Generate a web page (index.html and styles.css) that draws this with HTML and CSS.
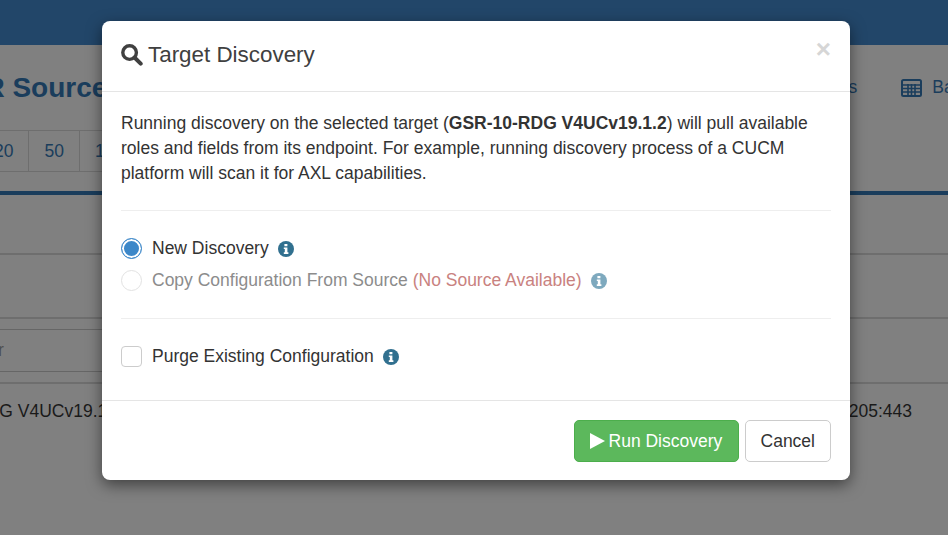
FILE: index.html
```html
<!DOCTYPE html>
<html lang="en">
<head>
  <meta charset="UTF-8">
  <meta name="viewport" content="width=device-width, initial-scale=1.0">
  <title>Target Discovery</title>
  <link rel="stylesheet" href="styles.css">
</head>
<body>

<!-- Screen behind the dialog, already dimmed -->
<div class="screen">
  <div class="topbar"></div>

  <div class="title-row">
    <h1 class="screen-title">CDR Source</h1>
    <div class="screen-links">
      <a class="screen-link">Settings</a>
      <a class="screen-link">
        <svg class="table-icon" viewBox="0 0 21 18">
          <rect x="1" y="1" width="19" height="16" rx="1.5" fill="none" stroke="currentColor" stroke-width="2"/>
          <path d="M1 6h19M1 9.5h19M1 13h19M7 5v12M10.5 5v12M14 5v12" stroke="currentColor" stroke-width="1.6" fill="none"/>
        </svg>
        Bases
      </a>
    </div>
  </div>

  <div class="pager">
    <span class="pager-cell">20</span>
    <span class="pager-cell">50</span>
    <span class="pager-cell">100</span>
  </div>

  <div class="table-head"></div>
  <div class="table-sub"></div>
  <div class="filter-row">
    <div class="filter-box">Filter</div>
  </div>
  <div class="table-row">
    <span class="row-name">GSR-10-RDG V4UCv19.1.2</span>
    <span class="row-host">10.10.20.205:443</span>
  </div>
</div>

<!-- Discovery dialog -->
<div class="dialog">
  <div class="dialog-header">
    <h4 class="dialog-title">
      <svg class="search-icon" viewBox="0 0 22 22">
        <circle cx="8.6" cy="8.6" r="6.8" fill="none" stroke="currentColor" stroke-width="3.4"/>
        <path d="M13.5 13.5l6.2 6.2" stroke="currentColor" stroke-width="4" stroke-linecap="round"/>
      </svg>
      Target Discovery
    </h4>
    <span class="close-x">&times;</span>
  </div>

  <div class="dialog-body">
    <p class="intro">Running discovery on the selected target (<b>GSR-10-RDG V4UCv19.1.2</b>) will pull available roles and fields from its endpoint. For example, running discovery process of a CUCM platform will scan it for AXL capabilities.</p>
    <hr class="divider">

    <div class="options">
      <div class="option">
        <span class="radio checked"></span>
        <span>New Discovery</span>
        <svg class="info-icon" viewBox="0 0 16 16"><circle cx="8" cy="8" r="8" fill="currentColor"/><path d="M6.4 3h3v2.2h-3zM5.8 6.4h3.6v4.9h1v1.7H5.8v-1.7h1v-3.2h-1z" fill="#fff"/></svg>
      </div>
      <div class="option disabled">
        <span class="radio"></span>
        <span>Copy Configuration From Source <span class="no-source">(No Source Available)</span></span>
        <svg class="info-icon" viewBox="0 0 16 16"><circle cx="8" cy="8" r="8" fill="currentColor"/><path d="M6.4 3h3v2.2h-3zM5.8 6.4h3.6v4.9h1v1.7H5.8v-1.7h1v-3.2h-1z" fill="#fff"/></svg>
      </div>
    </div>
    <hr class="divider">

    <div class="option purge">
      <span class="checkbox"></span>
      <span>Purge Existing Configuration</span>
      <svg class="info-icon" viewBox="0 0 16 16"><circle cx="8" cy="8" r="8" fill="currentColor"/><path d="M6.4 3h3v2.2h-3zM5.8 6.4h3.6v4.9h1v1.7H5.8v-1.7h1v-3.2h-1z" fill="#fff"/></svg>
    </div>
  </div>

  <div class="dialog-footer">
    <button class="action action-run">
      <svg class="play-icon" viewBox="0 0 15 16"><path d="M0 0l15 8-15 8z" fill="currentColor"/></svg>
      Run Discovery
    </button>
    <button class="action action-cancel">Cancel</button>
  </div>
</div>

</body>
</html>
```
FILE: styles.css
```css
/* Global Styling */
html, body {
  height: 100%;
}
body {
  position: relative;
  margin: 0;
  overflow: hidden;
  font-family: "Liberation Sans", Arial, sans-serif;
  font-size: 17.5px;
  line-height: 25px;
  color: #333;
  background: #808080;
}

/* Screen behind the dialog */
.screen {
  height: 535px;
  overflow: hidden;
  color: #1a1a1a;
}
.topbar {
  height: 45px;
  background: #224669;
}
.title-row {
  display: flex;
  justify-content: space-between;
  align-items: center;
  height: 85px;
}
.screen-title {
  margin: 0 0 0 -56px;
  font-size: 28px;
  font-weight: bold;
  color: #1a3d5c;
  white-space: nowrap;
}
.screen-links {
  display: flex;
  gap: 44px;
  margin-right: -33px;
  color: #1a3d5c;
}
.screen-link {
  display: flex;
  align-items: center;
  gap: 10px;
}
.table-icon {
  width: 21px;
  height: 18px;
}
.pager {
  display: flex;
  width: fit-content;
  height: 42px;
  margin-left: -21px;
  box-sizing: border-box;
  border-top: 1px solid #6e6e6e;
  border-bottom: 1px solid #6e6e6e;
  color: #1a3d5c;
}
.pager-cell {
  display: flex;
  align-items: center;
  padding: 0 15px;
  border-right: 1px solid #6e6e6e;
}
.table-head {
  height: 58px;
  margin-top: 19px;
  border-top: 4px solid #1a3d5c;
  border-bottom: 2px solid #6e6e6e;
}
.table-sub {
  height: 62px;
  border-bottom: 2px solid #6e6e6e;
}
.filter-row {
  height: 53px;
  padding-top: 10px;
  border-bottom: 2px solid #6e6e6e;
}
.filter-box {
  width: 200px;
  height: 43px;
  margin-left: -35px;
  box-sizing: border-box;
  padding-top: 8px;
  border-top: 1px solid #666;
  border-bottom: 1px solid #666;
  color: #4d4d4d;
}
.table-row {
  display: flex;
  justify-content: space-between;
  padding-top: 15px;
  margin: 0 36px 0 -95px;
  white-space: nowrap;
}

/* Dialog on top of the screen */
.dialog {
  position: absolute;
  left: 102px;
  top: 21px;
  width: 748px;
  height: 459px;
  display: flex;
  flex-direction: column;
  background: #fff;
  border-radius: 8px;
  box-shadow: 0 5px 15px rgba(0, 0, 0, 0.5);
}
.dialog-header {
  display: flex;
  justify-content: space-between;
  height: 70px;
  padding: 0 19px;
  border-bottom: 1px solid #e5e5e5;
}
.dialog-title {
  margin: 0;
  font-size: 22.4px;
  font-weight: normal;
  line-height: 67px;
  height: 67px;
  color: #404040;
  display: flex;
  align-items: center;
  gap: 5px;
}
.search-icon {
  width: 22px;
  height: 22px;
}
.close-x {
  font-size: 26px;
  font-weight: bold;
  line-height: 56px;
  color: #d6d6d6;
}
.dialog-body {
  flex: 1;
  padding: 19px 19px 0;
}
.intro {
  margin: 0;
}
.divider {
  margin: 24px 0 0;
  border: 0;
  border-top: 1px solid #eee;
}
.options {
  display: flex;
  flex-direction: column;
  gap: 7px;
  padding: 25px 0 1px;
}
.option {
  display: flex;
  align-items: center;
  height: 25px;
}
.disabled {
  color: #8c8c8c;
}
.no-source {
  color: #c9827f;
}
.radio, .checkbox {
  width: 21px;
  height: 21px;
  box-sizing: border-box;
  margin-right: 10px;
  background: #fff;
  border: 1px solid #ccc;
}
.radio {
  border-radius: 50%;
}
.disabled .radio {
  border-color: #e2e2e2;
}
.radio.checked {
  border-color: #3d88c9;
  background: #3d88c9;
  box-shadow: inset 0 0 0 2px #fff;
}
.checkbox {
  border-radius: 4px;
}
.info-icon {
  width: 16px;
  height: 16px;
  margin-left: 9px;
  color: #31708f;
}
.disabled .info-icon {
  color: #7ea9be;
}
.purge {
  margin-top: 25px;
}
.dialog-footer {
  display: flex;
  justify-content: flex-end;
  gap: 6px;
  height: 80px;
  box-sizing: border-box;
  padding: 19px 19px 0;
  border-top: 1px solid #e5e5e5;
}
.action {
  height: 42px;
  box-sizing: border-box;
  padding: 0 15px;
  border-radius: 5px;
  border: 1px solid #ccc;
  font-family: inherit;
  font-size: 17.5px;
  color: #333;
  background: #fff;
}
.action-run {
  display: flex;
  align-items: center;
  gap: 4px;
  width: 165px;
  color: #fff;
  background: #5cb85c;
  border-color: #4cae4c;
}
.play-icon {
  width: 15px;
  height: 16px;
}
```
